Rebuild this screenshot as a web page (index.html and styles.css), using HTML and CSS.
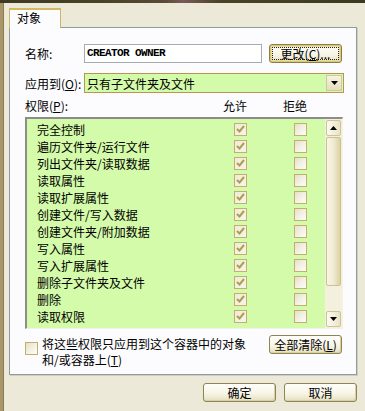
FILE: index.html
```html
<!DOCTYPE html>
<html lang="zh-CN">
<head>
<meta charset="utf-8">
<title>对象</title>
<link rel="stylesheet" href="styles.css">
</head>
<body>
<div class="strip"></div>
<div class="window">
  <div class="tabs"><div class="tab">对象</div></div>
  <div class="panel">
    <div class="name-row">
      <span class="label">名称:</span>
      <div class="textbox">CREATOR OWNER</div>
      <button class="btn btn-default"><span class="focus">更改(<u>C</u>)...</span></button>
    </div>
    <div class="apply-row">
      <span class="label">应用到(<u>O</u>):</span>
      <div class="combo">
        <span class="combo-text">只有子文件夹及文件</span>
        <span class="drop"><svg width="7" height="4" viewBox="0 0 7 4"><path d="M0 0H7L3.5 4Z" fill="#000"/></svg></span>
      </div>
    </div>
    <div class="perm-head">
      <span>权限(<u>P</u>):</span><span>允许</span><span></span><span>拒绝</span>
    </div>
    <div class="list">
      <div class="rows">
        <div class="item"><span>完全控制</span><span class="cb on"><svg width="11" height="11" viewBox="0 0 11 11"><path d="M2 5L4.5 7.5L9 2" fill="none" stroke="#ABA04E" stroke-width="2"/></svg></span><span class="cb"></span></div>
        <div class="item"><span>遍历文件夹/运行文件</span><span class="cb on"><svg width="11" height="11" viewBox="0 0 11 11"><path d="M2 5L4.5 7.5L9 2" fill="none" stroke="#ABA04E" stroke-width="2"/></svg></span><span class="cb"></span></div>
        <div class="item"><span>列出文件夹/读取数据</span><span class="cb on"><svg width="11" height="11" viewBox="0 0 11 11"><path d="M2 5L4.5 7.5L9 2" fill="none" stroke="#ABA04E" stroke-width="2"/></svg></span><span class="cb"></span></div>
        <div class="item"><span>读取属性</span><span class="cb on"><svg width="11" height="11" viewBox="0 0 11 11"><path d="M2 5L4.5 7.5L9 2" fill="none" stroke="#ABA04E" stroke-width="2"/></svg></span><span class="cb"></span></div>
        <div class="item"><span>读取扩展属性</span><span class="cb on"><svg width="11" height="11" viewBox="0 0 11 11"><path d="M2 5L4.5 7.5L9 2" fill="none" stroke="#ABA04E" stroke-width="2"/></svg></span><span class="cb"></span></div>
        <div class="item"><span>创建文件/写入数据</span><span class="cb on"><svg width="11" height="11" viewBox="0 0 11 11"><path d="M2 5L4.5 7.5L9 2" fill="none" stroke="#ABA04E" stroke-width="2"/></svg></span><span class="cb"></span></div>
        <div class="item"><span>创建文件夹/附加数据</span><span class="cb on"><svg width="11" height="11" viewBox="0 0 11 11"><path d="M2 5L4.5 7.5L9 2" fill="none" stroke="#ABA04E" stroke-width="2"/></svg></span><span class="cb"></span></div>
        <div class="item"><span>写入属性</span><span class="cb on"><svg width="11" height="11" viewBox="0 0 11 11"><path d="M2 5L4.5 7.5L9 2" fill="none" stroke="#ABA04E" stroke-width="2"/></svg></span><span class="cb"></span></div>
        <div class="item"><span>写入扩展属性</span><span class="cb on"><svg width="11" height="11" viewBox="0 0 11 11"><path d="M2 5L4.5 7.5L9 2" fill="none" stroke="#ABA04E" stroke-width="2"/></svg></span><span class="cb"></span></div>
        <div class="item"><span>删除子文件夹及文件</span><span class="cb on"><svg width="11" height="11" viewBox="0 0 11 11"><path d="M2 5L4.5 7.5L9 2" fill="none" stroke="#ABA04E" stroke-width="2"/></svg></span><span class="cb"></span></div>
        <div class="item"><span>删除</span><span class="cb on"><svg width="11" height="11" viewBox="0 0 11 11"><path d="M2 5L4.5 7.5L9 2" fill="none" stroke="#ABA04E" stroke-width="2"/></svg></span><span class="cb"></span></div>
        <div class="item"><span>读取权限</span><span class="cb on"><svg width="11" height="11" viewBox="0 0 11 11"><path d="M2 5L4.5 7.5L9 2" fill="none" stroke="#ABA04E" stroke-width="2"/></svg></span><span class="cb"></span></div>
      </div>
      <div class="scrollbar">
        <span class="sb-btn"><svg width="7" height="4" viewBox="0 0 7 4"><path d="M0 4H7L3.5 0Z" fill="#000"/></svg></span>
        <span class="thumb"></span>
        <span class="track"></span>
        <span class="sb-btn"><svg width="7" height="4" viewBox="0 0 7 4"><path d="M0 0H7L3.5 4Z" fill="#000"/></svg></span>
      </div>
    </div>
    <div class="bottom-row">
      <span class="cb solo"></span>
      <span class="note">将这些权限只应用到这个容器中的对象<br>和/或容器上(<u>T</u>)</span>
      <button class="btn">全部清除(<u>L</u>)</button>
    </div>
  </div>
  <div class="actions">
    <button class="btn">确定</button>
    <button class="btn">取消</button>
  </div>
</div>
</body>
</html>
```
FILE: styles.css
```css
* { box-sizing: border-box; }
html, body {
  margin: 0;
  padding: 0;
  width: 365px;
  height: 411px;
  overflow: hidden;
  background: #ECE9D8;
  font-family: "Noto Sans CJK SC", "Liberation Sans", sans-serif;
  font-size: 12px;
  color: #000;
}
.strip {
  height: 3px;
  background: linear-gradient(90deg, #3E3A22 0%, #4A4426 30%, #5A4A36 45%, #7A5A5A 50%, #4A4426 60%, #3C3920 100%);
}
.window {
  height: 408px;
  border-left: 3px solid #A8966A;
  box-shadow: inset 1px 0 0 #8C7C52;
  padding: 5px 8px 0 6px;
}
.tabs { display: flex; position: relative; z-index: 1; }
.tab {
  width: 52px;
  height: 20px;
  background: #FCFCFE;
  border: 1px solid #C8B56E;
  border-bottom: none;
  border-top: 2px solid #D2BA62;
  padding-left: 7px;
  line-height: 16px;
}
.panel {
  margin-top: -1px;
  width: 348px;
  height: 348px;
  background: #FCFCFE;
  border: 1px solid #919B9C;
  box-shadow: 1px 1px 0 #D0CDBE;
  padding: 16px 12px 0 15px;
  display: flex;
  flex-direction: column;
}
.name-row, .apply-row { display: flex; align-items: center; }
.label { width: 59px; white-space: nowrap; }
u { text-decoration: underline; }
.textbox {
  width: 178px;
  height: 19px;
  border: 1px solid #A5ACB2;
  background: #fff;
  font-family: "Liberation Mono", monospace;
  font-weight: bold;
  font-size: 11px;
  letter-spacing: -0.6px;
  line-height: 17px;
  padding-left: 2px;
}
.btn {
  font-family: "Noto Sans CJK SC", "Liberation Sans", sans-serif;
  font-size: 12px;
  color: #000;
  width: 73px;
  height: 19px;
  padding: 0;
  border: 1px solid #8F8456;
  border-radius: 3px;
  background: linear-gradient(#FFFFF9 0%, #F7F5E8 55%, #E6DFBC 100%);
  box-shadow: inset -1px -1px 0 #D8CFA6;
  line-height: 16px;
  display: flex;
  align-items: center;
  justify-content: center;
}
.name-row .btn { margin-left: 7px; }
.btn-default {
  border-color: #8A7E44;
  box-shadow: inset 0 0 0 1px #D9C877, inset 0 0 0 2px #E8DCA0;
  padding: 2px;
}
.focus {
  flex: 1;
  align-self: stretch;
  border: 1px dotted #222;
  display: flex;
  align-items: center;
  justify-content: center;
  line-height: 12px;
}
.apply-row { margin-top: 10px; }
.combo {
  width: 260px;
  height: 20px;
  border: 1px solid #B99650;
  background: #D4FBA9;
  display: flex;
  align-items: center;
  justify-content: space-between;
  padding: 0 1px 0 2px;
}
.drop {
  width: 16px;
  height: 16px;
  border: 1px solid #CFC7A0;
  background: linear-gradient(#F6F3E2, #E4DDBC);
  display: flex;
  align-items: center;
  justify-content: center;
}
.perm-head {
  margin-top: 7px;
  display: grid;
  grid-template-columns: 198px 24px 36px 24px;
  line-height: 12px;
  height: 12px;
}
.list {
  margin-top: 5px;
  width: 318px;
  height: 212px;
  border-top: 2px solid #8C8C8C;
  border-left: 2px solid #8C8C8C;
  border-right: 1px solid #F4F2E8;
  border-bottom: 1px solid #F4F2E8;
  background: #D4FBA9;
  display: flex;
}
.rows { flex: 1; padding-top: 2px; }
.item {
  height: 17px;
  display: grid;
  grid-template-columns: 197px 13px 47px 13px;
  align-items: center;
  padding-left: 10px;
  line-height: 17px;
  white-space: nowrap;
}
.item > span:nth-child(3) { grid-column: 4; }
.cb {
  width: 13px;
  height: 13px;
  border: 1px solid #C4B06C;
  background: linear-gradient(135deg, #E4E0C8 0%, #F4F2E6 55%, #FDFDF8 100%);
  display: flex;
  align-items: center;
  justify-content: center;
}
.cb.on { background: linear-gradient(135deg, #EEEBD9 0%, #F7F5EC 100%); }
.scrollbar {
  width: 17px;
  background: #F3F0DE;
  display: flex;
  flex-direction: column;
  padding: 1px 1px 1px 1px;
  gap: 1px;
}
.sb-btn {
  height: 16px;
  border: 1px solid #CEC393;
  border-radius: 2px;
  background: linear-gradient(90deg, #FCFBF2, #E9E3C6);
  display: flex;
  align-items: center;
  justify-content: center;
}
.thumb {
  height: 149px;
  border: 1px solid #CBC08E;
  border-radius: 2px;
  background: linear-gradient(90deg, #F8F6E8 0%, #EFEAD2 50%, #DCD2A2 100%);
}
.track { flex: 1; }
.bottom-row {
  margin-top: 6px;
  display: flex;
  align-items: flex-start;
}
.cb.solo { margin-top: 7px; }
.note {
  margin-left: 4px;
  margin-top: 1px;
  line-height: 16px;
  width: 227px;
  white-space: nowrap;
}
.actions {
  margin-top: 8px;
  display: flex;
  justify-content: flex-end;
  gap: 8px;
}
```
